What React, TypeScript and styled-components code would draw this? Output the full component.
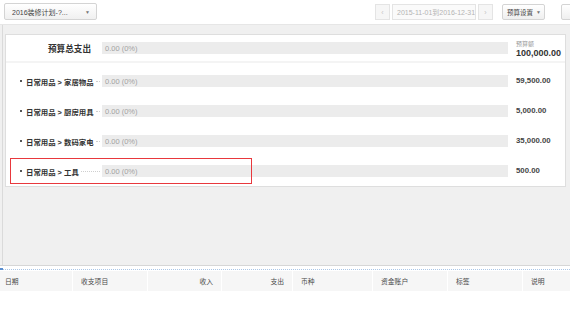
import React from "react";
import styled, { createGlobalStyle } from "styled-components";

const GlobalStyle = createGlobalStyle`
  html, body {
    margin: 0;
    padding: 0;
    background: #ffffff;
    overflow: hidden;
  }
  body {
    font-family: "Liberation Sans", "Noto Sans CJK SC", sans-serif;
    color: #333;
  }
`;

const Page = styled.div`
  width: 570px;
  height: 325px;
  display: flex;
  flex-direction: column;
  overflow: hidden;
`;

const Toolbar = styled.div`
  height: 25px;
  flex-shrink: 0;
  display: flex;
  align-items: flex-start;
  padding: 3px 0 0 4px;
  box-sizing: border-box;
  border-bottom: 1px solid #e6e6e6;
  overflow: hidden;
`;

const Select = styled.div`
  width: 93px;
  height: 17px;
  box-sizing: border-box;
  border: 1px solid #d4d4d4;
  border-radius: 2px;
  background: linear-gradient(#ffffff, #f0f0f0);
  display: flex;
  align-items: center;
  justify-content: space-between;
  padding: 0 6px 0 7px;
  font-size: 7px;
  color: #444;
  flex-shrink: 0;
`;

const Caret = styled.span`
  font-size: 5px;
  color: #777;
`;

const DateNav = styled.div`
  margin-left: 278px;
  margin-top: 1px;
  display: flex;
  gap: 2px;
  flex-shrink: 0;
`;

const NavButton = styled.div`
  width: 15px;
  height: 16px;
  box-sizing: border-box;
  border: 1px solid #e4e4e4;
  background: #f6f6f6;
  color: #c4c4c4;
  font-size: 7px;
  display: flex;
  align-items: center;
  justify-content: center;
`;

const DateBox = styled.div`
  width: 84px;
  height: 16px;
  box-sizing: border-box;
  border: 1px solid #e4e4e4;
  background: #fafafa;
  color: #b4b4b4;
  font-size: 7px;
  display: flex;
  align-items: center;
  padding-left: 4px;
  white-space: nowrap;
  overflow: hidden;
`;

const ToolButton = styled.div<{ $gap: number }>`
  margin-left: ${p => p.$gap}px;
  margin-top: 1px;
  height: 16px;
  min-width: 20px;
  box-sizing: border-box;
  border: 1px solid #d4d4d4;
  border-radius: 2px;
  background: linear-gradient(#ffffff, #efefef);
  font-size: 6.5px;
  color: #444;
  display: flex;
  align-items: center;
  gap: 3px;
  padding: 0 3px 0 4px;
  flex-shrink: 0;
  white-space: nowrap;
`;

const Content = styled.div`
  height: 241px;
  flex-shrink: 0;
  background: #f0f0f0;
  padding: 0 4px 0 2px;
  box-sizing: border-box;
  border-bottom: 1px solid #d6d6d6;
`;

const Frame = styled.div`
  height: 100%;
  border-left: 1px solid #dadada;
  padding: 9px 0 0 2px;
  box-sizing: border-box;
`;

const Card = styled.div`
  background: #ffffff;
  border: 1px solid #dedede;
  height: 153px;
  box-sizing: border-box;
`;

const Row = styled.div<{ $total?: boolean }>`
  position: relative;
  display: grid;
  grid-template-columns: 96px 406px 1fr;
  align-items: center;
  height: ${p => (p.$total ? 26 : 30)}px;
  border-bottom: ${p => (p.$total ? "2px solid #f4f4f4" : "none")};
`;

const RowList = styled.div`
  padding-top: 3px;
`;

const TotalLabel = styled.div`
  text-align: right;
  padding-right: 11px;
  font-size: 8.6px;
  font-weight: bold;
  color: #333;
`;

const ItemLabel = styled.div`
  display: flex;
  align-items: center;
  padding-left: 14px;
  font-size: 7.4px;
  font-weight: bold;
  color: #333;
  white-space: nowrap;
  overflow: hidden;
`;

const Bullet = styled.span`
  width: 2px;
  height: 2px;
  background: #555;
  margin-right: 4px;
  flex-shrink: 0;
`;

const Leader = styled.span`
  flex: 1;
  margin: 0 2px 0 2px;
  border-bottom: 1px dotted #cfcfcf;
  height: 0;
  min-width: 4px;
`;

const Bar = styled.div`
  height: 12px;
  background: #ececec;
  font-size: 7.5px;
  color: #a2a2a2;
  display: flex;
  align-items: center;
  padding-left: 3px;
`;

const Amount = styled.div<{ $big?: boolean }>`
  font-size: ${p => (p.$big ? 9 : 7.8)}px;
  font-weight: bold;
  color: ${p => (p.$big ? "#333" : "#444")};
  line-height: 1;
  padding-left: ${p => (p.$big ? 0 : 8)}px;
  white-space: nowrap;
`;

const AmountStack = styled.div`
  display: flex;
  flex-direction: column;
  gap: 2px;
  margin-top: 2px;
  padding-left: 8px;
`;

const AmountCaption = styled.div`
  font-size: 6px;
  color: #999;
  line-height: 1;
`;

const Highlight = styled.div`
  position: absolute;
  left: 4px;
  top: 2px;
  width: 242px;
  height: 26px;
  box-sizing: border-box;
  border: 1.3px solid #e8383d;
  pointer-events: none;
`;

const Splitter = styled.div`
  height: 3px;
  flex-shrink: 0;
  border-bottom: 1px dotted #a9c5e6;
  position: relative;
`;

const SplitterTick = styled.span`
  position: absolute;
  left: 0;
  bottom: -1px;
  width: 3px;
  height: 2px;
  background: #5b8fd0;
`;

const TableHeader = styled.div`
  display: grid;
  grid-template-columns: 72px 75px 74px 71px 80px 75px 75px 1fr;
  height: 20px;
  background: #f6f6f6;
  flex-shrink: 0;
  margin-top: 1px;
`;

const HeadCell = styled.div<{ $right?: boolean; $first?: boolean }>`
  display: flex;
  align-items: center;
  justify-content: ${p => (p.$right ? "flex-end" : "flex-start")};
  padding: ${p => (p.$first ? "0 0 0 5px" : p.$right ? "0 8px 0 0" : "0 0 0 8px")};
  border-left: ${p => (p.$first ? "none" : "1px solid #ffffff")};
  font-size: 6.8px;
  color: #4a4a4a;
  white-space: nowrap;
`;

const items = [
  { name: "日常用品 > 家居物品", amount: "59,500.00" },
  { name: "日常用品 > 厨房用具", amount: "5,000.00" },
  { name: "日常用品 > 数码家电", amount: "35,000.00" },
  { name: "日常用品 > 工具", amount: "500.00", marked: true },
];

const columns = [
  { title: "日期" },
  { title: "收支项目" },
  { title: "收入", right: true },
  { title: "支出", right: true },
  { title: "币种" },
  { title: "资金账户" },
  { title: "标签" },
  { title: "说明" },
];

export default function App() {
  return (
    <Page>
      <GlobalStyle />
      <Toolbar>
        <Select>
          <span>2016装修计划-?...</span>
          <Caret>▼</Caret>
        </Select>
        <DateNav>
          <NavButton>‹</NavButton>
          <DateBox>2015-11-01到2016-12-31</DateBox>
          <NavButton>›</NavButton>
        </DateNav>
        <ToolButton $gap={9}>
          预算设置 <Caret>▼</Caret>
        </ToolButton>
        <ToolButton $gap={16} />
      </Toolbar>

      <Content>
        <Frame>
          <Card>
            <Row $total>
              <TotalLabel>预算总支出</TotalLabel>
              <Bar>0.00 (0%)</Bar>
              <AmountStack>
                <AmountCaption>预算额</AmountCaption>
                <Amount $big>100,000.00</Amount>
              </AmountStack>
            </Row>
            <RowList>
              {items.map(item => (
                <Row key={item.name}>
                  <ItemLabel>
                    <Bullet />
                    {item.name}
                    <Leader />
                  </ItemLabel>
                  <Bar>0.00 (0%)</Bar>
                  <Amount>{item.amount}</Amount>
                  {item.marked && <Highlight />}
                </Row>
              ))}
            </RowList>
          </Card>
        </Frame>
      </Content>

      <Splitter>
        <SplitterTick />
      </Splitter>

      <TableHeader>
        {columns.map((col, i) => (
          <HeadCell key={col.title} $right={col.right} $first={i === 0}>
            {col.title}
          </HeadCell>
        ))}
      </TableHeader>
    </Page>
  );
}
